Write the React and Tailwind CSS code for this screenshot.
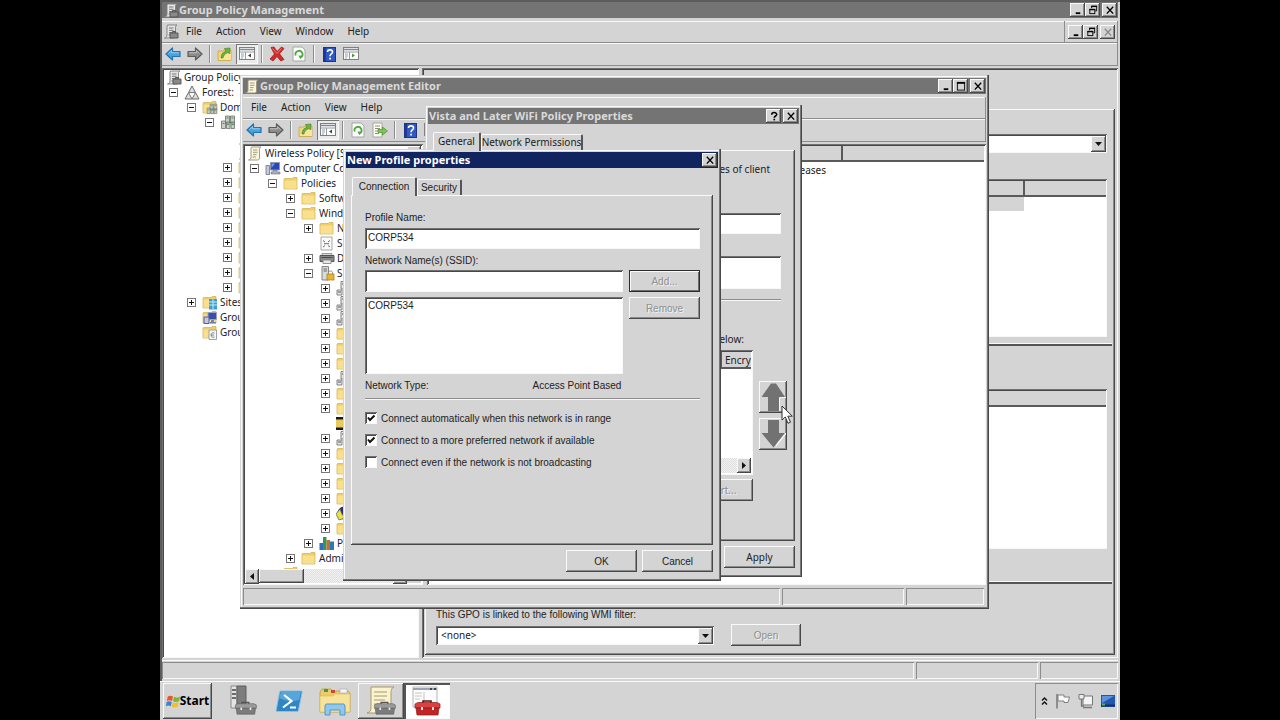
const RAISED =
  "bg-[#d4d4d4] shadow-[inset_-1px_-1px_0_#484848,inset_1px_1px_0_#fafafa,inset_-2px_-2px_0_#8c8c8c]";
const SUNKEN =
  "shadow-[inset_1px_1px_0_#707070,inset_-1px_-1px_0_#f8f8f8,inset_2px_2px_0_#484848]";
const SHALLOW = "shadow-[inset_1px_1px_0_#8c8c8c,inset_-1px_-1px_0_#f8f8f8]";
const WINDOW =
  "bg-[#d4d4d4] shadow-[inset_-1px_-1px_0_#484848,inset_-2px_-2px_0_#777777,inset_1px_1px_0_#d4d4d4,inset_2px_2px_0_#fafafa]";
const SYSTEM = "font-['Noto_Sans',sans-serif] text-[10px]";
const DIALOG = "font-['Liberation_Sans',Arial,sans-serif] text-[10px]";

/* ---------- Icons ---------- */

function Arrow({ dir, color, edge }) {
  return (
    <svg width="16" height="14" viewBox="0 0 16 14" aria-hidden="true" className={dir === "right" ? "-scale-x-100" : ""}>
      <path d="M1 7 L7.5 1 V4.5 H15 V9.5 H7.5 V13 Z" fill={color} stroke={edge} strokeWidth="1.2" strokeLinejoin="round" />
      <path d="M3.5 6.5 L6.6 3.7 V5.8 H14" fill="none" stroke="#ffffff" strokeOpacity=".45" />
    </svg>
  );
}

function FolderUp() {
  return (
    <svg width="16" height="16" viewBox="0 0 16 16" aria-hidden="true">
      <path d="M1 5 H6 L7 4 H14 V14.5 H1 Z" fill="#f2d675" stroke="#c9a53c" strokeWidth=".8" />
      <path d="M2 14 L4 8 H14 V14 Z" fill="#f8e59a" />
      <path d="M4 12 C4 8 6 6 9 5.500 L7.500 2.500 L13 2 L12.500 7.500 L10.500 6.500 C8 8 6.500 9 6 12 Z" fill="#6cb544" stroke="#3d7d22" strokeWidth=".6" />
    </svg>
  );
}

function PaneIcon({ flip }) {
  return (
    <svg width="16" height="14" viewBox="0 0 16 14" aria-hidden="true">
      <rect x=".5" y=".5" width="15" height="12" fill="#fdfdfd" stroke="#808080" />
      <path d="M1 2.500 H15" stroke="#7a8a9a" strokeWidth="1.500" />
      <path d="M1 5 H15 M6.500 5 V12" stroke="#9a9a9a" />
      <path d="M2 7 H5 M2 9 H5 M2 11 H4" stroke="#8aa0b8" />
      {flip ? <path d="M9 6.500 L12 8.500 L9 10.500 Z" fill="#489a38" /> : <path d="M12 6.500 L9 8.500 L12 10.500 Z" fill="#444" />}
    </svg>
  );
}

function DeleteIcon() {
  return (
    <svg width="16" height="16" viewBox="0 0 16 16" aria-hidden="true">
      <path d="M2 1.500 L5 1 L8 5.500 L12.500 1 L15 2.500 L10.500 7.800 L15 13.500 L11.800 15 L8 10.500 L4 15 L1 13 L5.500 8 Z" fill="#d22a26" stroke="#9c1512" strokeWidth=".7" />
      <path d="M3.500 2.500 L8 7.500 L12.500 2.500" fill="none" stroke="#f07a74" />
    </svg>
  );
}

function RefreshIcon() {
  return (
    <svg width="14" height="16" viewBox="0 0 14 16" aria-hidden="true">
      <path d="M1 1 H10 L13 4 V15 H1 Z" fill="#fdfdfd" stroke="#a6a6a6" />
      <path d="M3.700 9.500 A3.500 3.500 0 1 1 8.500 11.500" fill="none" stroke="#4fa83d" strokeWidth="1.800" />
      <path d="M6.500 9.500 L10.500 9.800 L8.300 13.300 Z" fill="#4fa83d" />
    </svg>
  );
}

function ExportIcon() {
  return (
    <svg width="16" height="16" viewBox="0 0 16 16" aria-hidden="true">
      <path d="M1 1 H10 V15 H1 Z" fill="#fdfdf4" stroke="#a6a6a6" />
      <path d="M3 4 H8 M3 6.500 H8 M3 9 H6 M3 11.500 H7" stroke="#8f8f70" />
      <path d="M6 7.500 H10.500 V5 L15.500 9 L10.500 13 V10.500 H6 Z" fill="#7cc552" stroke="#4a9130" strokeWidth=".7" />
    </svg>
  );
}

function HelpIcon() {
  return (
    <svg width="13" height="15" viewBox="0 0 13 15" aria-hidden="true">
      <rect x=".5" y=".5" width="12" height="14" fill="#3159c4" stroke="#1d3584" />
      <path d="M1 1 H3 V14 H1 Z" fill="#1d3a9a" />
      <path d="M4.500 5 C4.500 2.200 9.500 2.200 9.500 5 C9.500 7 7 7 7 9.300" fill="none" stroke="#fff" strokeWidth="1.600" />
      <rect x="6.200" y="10.700" width="1.700" height="1.800" fill="#fff" />
    </svg>
  );
}

function Scroll({ tools }) {
  return (
    <svg width="16" height="15" viewBox="0 0 16 15" aria-hidden="true">
      <path d="M4.500 1 H14 C12.500 1.500 12.500 3 12.500 4 V12 C12.500 13.500 11.500 14 10.500 14 H1.500 C3.500 13.500 4 12.500 4 11 V2.500 Z" fill={tools ? "#e6e6e6" : "#fbf5de"} stroke={tools ? "#7c7c7c" : "#9b917a"} strokeWidth=".9" />
      <path d="M6 4 H10.500 M6 6.300 H10.500 M6 8.600 H9.500 M5.500 11 H9" stroke={tools ? "#777" : "#a59b78"} />
      {tools && <path d="M7 9 H15 V14 H7 Z M9.500 9 V7.500 H12.500 V9" fill="#8a8a8a" stroke="#505050" strokeWidth=".9" />}
    </svg>
  );
}

function ForestIcon() {
  return (
    <svg width="16" height="15" viewBox="0 0 16 15" aria-hidden="true">
      <path d="M8 1 L15 14 H1 Z" fill="#dcdcdc" stroke="#6d6d6d" />
      <path d="M4.500 7.500 H11.500 L8 14 Z" fill="#fafafa" stroke="#6d6d6d" strokeWidth=".9" />
    </svg>
  );
}

function FolderShape() {
  return (
    <>
      <path d="M1 3.500 L1.500 2.500 H9 L10 1.500 H14 V13 H1 Z" fill="#efcd68" stroke="#cfae4d" strokeWidth=".7" />
      <path d="M1.500 4.500 H13.500 V12.700 H1.500 Z" fill="#f8e08e" />
    </>
  );
}

function ServersShape() {
  return (
    <>
      <path d="M5.500 1 H9.500 V8 H5.500 Z M10.500 1 H14.500 V8 H10.500 Z M1.500 6 H5.500 V13.500 H1.500 Z M6.500 7 H10 V13.500 H6.500 Z M11 7 H14.500 V13.500 H11 Z" fill="#c8cec8" stroke="#6a706a" strokeWidth=".8" />
      <path d="M6.500 3 H8.500 M11.500 3 H13.500 M2.500 8.500 H4.500 M7.200 9.500 H9.200 M11.800 9.500 H13.800" stroke="#4a9150" />
    </>
  );
}

function TreeIcon({ kind }) {
  if (kind === "scroll") return <Scroll />;
  if (kind === "gpm") return <Scroll tools />;
  if (kind === "forest") return <ForestIcon />;
  return (
    <svg width="16" height="15" viewBox="0 0 16 15" aria-hidden="true">
      {["folder", "domains", "sites", "modeling", "results"].includes(kind) && <FolderShape />}
      {kind === "domain" && <ServersShape />}
      {kind === "domains" && (
        <g transform="translate(4 3.500) scale(.75)">
          <ServersShape />
        </g>
      )}
      {kind === "sites" && (
        <>
          <path d="M7 4 H15 V14.500 H7 Z" fill="#3a9fd4" />
          <path d="M7 7 H15 M7 10 H15 M11 4 V14" stroke="#c6e8f8" />
        </>
      )}
      {kind === "modeling" && (
        <>
          <path d="M6 2.500 H14.500 V9.500 H6 Z" fill="#3950a8" stroke="#9aa2c4" />
          <path d="M2 7 H7 V13.500 H2 Z" fill="#c4c8dc" stroke="#54609a" />
          <path d="M9 10 H12 V12 H14 V13.500 H8 V12 H9 Z" fill="#7780b0" />
        </>
      )}
      {kind === "results" && (
        <>
          <path d="M7 5 H14.500 V14.500 H7 Z" fill="#f6f6f6" stroke="#8d8d8d" strokeWidth=".8" />
          <path d="M12.500 8 A2.300 2.300 0 1 0 12.500 12 M9.500 10 H12" fill="none" stroke="#6a7f9a" />
        </>
      )}
      {kind === "computer" && (
        <>
          <path d="M5.500 1.500 H14.500 V9 H5.500 Z" fill="#2746b8" stroke="#8f97b4" />
          <path d="M6.500 2.500 H10 L6.500 7 Z" fill="#7f9bea" />
          <path d="M8 9.500 H12 V11 H15 V13 H6 V11 H8 Z" fill="#a9adbd" stroke="#6c7084" strokeWidth=".6" />
          <path d="M1 4.500 H4.500 V13.500 H1 Z" fill="#c6cad8" stroke="#6c7084" strokeWidth=".8" />
        </>
      )}
      {kind === "script" && (
        <>
          <path d="M2 1 H13 V14 H2 Z" fill="#fafafa" stroke="#a8a8a8" />
          <path d="M4 4.500 L6 6 M11 4.500 L9 6 M4 11 L6 9.500 M11 11 L9 9.500 M5 7.700 H10" stroke="#6c6c6c" />
        </>
      )}
      {kind === "printer" && (
        <>
          <path d="M3 2.500 H13 V5 H3 Z" fill="#d4d4d4" stroke="#8a8a8a" strokeWidth=".8" />
          <path d="M1 4.500 H15 V10.500 H1 Z" fill="#8a8a8a" stroke="#555" />
          <path d="M2.500 6.500 H13.500" stroke="#4a4a4a" />
          <path d="M4 9 H12 V12.500 H4 Z" fill="#e8e8e8" stroke="#7c7c7c" strokeWidth=".8" />
        </>
      )}
      {kind === "secure" && (
        <>
          <path d="M3 .5 H9.500 V14 H3 Z" fill="#dadada" stroke="#858585" />
          <path d="M4.500 3 H8 M4.500 5 H8" stroke="#666" />
          <rect x="8" y="8" width="7" height="6" fill="#eab52d" stroke="#a87a10" strokeWidth=".7" />
          <path d="M9.500 8 V6.500 C9.500 4.500 13.500 4.500 13.500 6.500 V8" fill="none" stroke="#8d8d8d" />
        </>
      )}
      {kind === "server" && (
        <>
          <path d="M5 .5 H9 V8 H5 Z M1 9 H6 V14 H1 Z" fill="#e6e6e6" stroke="#777" strokeWidth=".9" />
          <path d="M6 3 H8 M2 11 H5" stroke="#555" />
        </>
      )}
      {kind === "wireless" && (
        <>
          <path d="M0 1 H16 V14 H0 Z" fill="#1a1a1a" />
          <path d="M0 3.500 H14 V11.500 H0 Z" fill="#e8c95c" />
        </>
      )}
      {kind === "ipsec" && (
        <>
          <circle cx="8" cy="7" r="6" fill="#26308c" stroke="#222" />
          <path d="M0 8 L4 3 L6 8 L9 12 L3 14 Z" fill="#e9e04a" stroke="#555" strokeWidth=".7" />
        </>
      )}
      {kind === "chart" && (
        <>
          <path d="M.5 7 H4 V14 H.5 Z" fill="#2e6fc0" />
          <path d="M4 1 H7.500 V14 H4 Z" fill="#2f9a50" />
          <path d="M7.500 4 H11 V14 H7.500 Z" fill="#c96a3c" />
          <path d="M11 5.500 H15 V14 H11 Z" fill="#2a7cae" />
        </>
      )}
    </svg>
  );
}

/* ---------- Shared controls ---------- */

const GLYPHS = {
  minimize: <path d="M3 9 H8" stroke="currentColor" strokeWidth="2" />,
  maximize: (
    <>
      <rect x="1.500" y="2" width="8" height="8" fill="none" stroke="currentColor" />
      <path d="M1 2 H10" stroke="currentColor" strokeWidth="2" />
    </>
  ),
  restore: (
    <>
      <path d="M4 3.500 V1.500 H9.500 V6.500 H8" fill="none" stroke="currentColor" />
      <path d="M3.500 1.500 H10" stroke="currentColor" strokeWidth="1.600" />
      <rect x="2" y="5" width="5.500" height="4.500" fill="none" stroke="currentColor" />
      <path d="M1.500 5 H8" stroke="currentColor" strokeWidth="1.600" />
    </>
  ),
  close: <path d="M2 2 L9 9.500 M9 2 L2 9.500" stroke="currentColor" strokeWidth="1.500" />,
  help: (
    <>
      <path d="M3 4 C3 1 8.500 1 8.500 3.800 C8.500 5.500 5.700 5.500 5.700 7.500" fill="none" stroke="currentColor" strokeWidth="1.700" />
      <rect x="4.900" y="8.500" width="1.800" height="1.800" fill="currentColor" />
    </>
  ),
};

function CaptionButton({ name, dim }) {
  return (
    <button type="button" aria-label={name} className={`${RAISED} flex h-[14px] w-[15px] items-center justify-center ${dim ? "text-[#8a8a8a]" : "text-black"}`}>
      <svg width="10" height="10" viewBox="0 0 11 11" aria-hidden="true">
        {GLYPHS[name]}
      </svg>
    </button>
  );
}

function CaptionButtons({ names, dimClose }) {
  return (
    <div className="flex items-center">
      {names.map((n) => (
        <span key={n} className={n === "close" ? "ml-[2px] flex" : "flex"}>
          <CaptionButton name={n} dim={dimClose && n === "close"} />
        </span>
      ))}
    </div>
  );
}

function TitleBar({ title, icon, buttons, active }) {
  return (
    <header className={`flex h-[16px] shrink-0 items-center px-px ${active ? "bg-[#10245f] text-white" : "bg-[#747474] text-[#dadada]"}`}>
      {icon}
      <h2 className="flex-1 truncate font-['Noto_Sans',sans-serif] text-[11px] leading-4 font-bold">{title}</h2>
      <CaptionButtons names={buttons} />
    </header>
  );
}

function PushButton({ children, size, disabled, isDefault, font = DIALOG }) {
  return (
    <button
      type="button"
      disabled={disabled}
      className={`${font} ${size} flex h-[22px] items-center justify-center ${
        isDefault ? "bg-[#d4d4d4] shadow-[inset_0_0_0_1px_#2c2c2c,inset_2px_2px_0_#fafafa,inset_-2px_-2px_0_#6c6c6c]" : RAISED
      } ${disabled ? "text-[#8e8e8e] [text-shadow:1px_1px_0_#f4f4f4]" : "text-[#222]"}`}
    >
      {children}
    </button>
  );
}

function MenuBar({ items, icon, children, label }) {
  return (
    <nav aria-label={label} className={`${SYSTEM} flex h-[22px] items-center border-r border-b border-r-[#8c8c8c] border-b-[#8c8c8c] pl-px text-[#222] shadow-[inset_0_1px_0_#f8f8f8]`}>
      {icon}
      {items.map((m) => (
        <button type="button" key={m} className="px-[7px]">
          {m}
        </button>
      ))}
      {children}
    </nav>
  );
}

function Tool({ label, pressed, children }) {
  return (
    <button
      type="button"
      aria-label={label}
      className={`flex h-[20px] w-[22px] items-center justify-center ${pressed ? "bg-[#ececec] shadow-[inset_1px_1px_0_#777,inset_-1px_-1px_0_#fafafa]" : ""}`}
    >
      {children}
    </button>
  );
}

function Separator() {
  return <span className="mx-[3px] h-[18px] w-[2px] border-r border-l border-l-[#8c8c8c] border-r-[#f8f8f8]" />;
}

function ToolBar({ children }) {
  return (
    <div role="toolbar" className="flex h-[23px] items-center border-r border-b border-r-[#8c8c8c] border-b-[#8c8c8c] shadow-[inset_0_1px_0_#f8f8f8]">
      {children}
    </div>
  );
}

function StatusBar() {
  return (
    <footer className="flex h-[17px] shrink-0 gap-[2px]">
      <span className={`${SHALLOW} flex-1`} />
      <span className={`${SHALLOW} w-[122px]`} />
      <span className={`${SHALLOW} w-[78px]`} />
    </footer>
  );
}

const INDENT = ["pl-[2px]", "pl-[5px]", "pl-[23px]", "pl-[41px]", "pl-[59px]", "pl-[76px]"];

function Expander({ open }) {
  return (
    <button type="button" aria-label={open ? "Collapse" : "Expand"} className="flex size-[9px] shrink-0 items-center justify-center border border-[#777] bg-white">
      <svg width="7" height="7" viewBox="0 0 7 7" aria-hidden="true">
        <path d={open ? "M1 3.500 H6" : "M1 3.500 H6 M3.500 1 V6"} stroke="#111" />
      </svg>
    </button>
  );
}

function Tree({ rows, label }) {
  return (
    <ul aria-label={label} className={`${SYSTEM} min-w-0 text-[#222]`}>
      {rows.map(([level, state, icon, text], i) => (
        <li key={i} className={`flex h-[15px] items-center ${INDENT[level]}`}>
          {level > 0 && (
            <span className="flex w-[15px] shrink-0">{state && <Expander open={state === "-"} />}</span>
          )}
          <span className="flex w-[18px] shrink-0">
            <TreeIcon kind={icon} />
          </span>
          <span className="whitespace-nowrap">{text}</span>
        </li>
      ))}
    </ul>
  );
}

function DropDown({ id, value, width, label }) {
  return (
    <div className={`relative flex ${width}`}>
      <select id={id} aria-label={label} className={`${SYSTEM} ${SUNKEN} h-[19px] w-full appearance-none bg-white pl-[5px] text-[#222]`}>
        <option>{value}</option>
      </select>
      <span className={`${RAISED} pointer-events-none absolute top-[2px] right-[1px] flex h-[16px] w-[15px] items-center justify-center`}>
        <svg width="7" height="4" viewBox="0 0 7 4" aria-hidden="true">
          <path d="M0 0 H7 L3.500 4 Z" fill="#111" />
        </svg>
      </span>
    </div>
  );
}

function ScrollButton({ dir }) {
  return (
    <button type="button" aria-label={`Scroll ${dir}`} className={`${RAISED} flex h-[15px] w-[14px] shrink-0 items-center justify-center`}>
      <svg width="4" height="7" viewBox="0 0 4 7" aria-hidden="true">
        <path d={dir === "left" ? "M4 0 V7 L0 3.500 Z" : "M0 0 V7 L4 3.500 Z"} fill="#111" />
      </svg>
    </button>
  );
}

function Tabs({ names }) {
  return (
    <div role="tablist" className="relative z-10 flex items-end">
      {names.map((n, i) => (
        <button
          type="button"
          role="tab"
          aria-selected={i === 0}
          key={n.text}
          className={`${n.font} flex items-center justify-center rounded-t-[2px] border-t border-l border-r-2 border-t-[#fafafa] border-l-[#fafafa] border-r-[#555] bg-[#d4d4d4] whitespace-nowrap text-[#222] ${
            i === 0 ? "-mb-px h-[19px] pb-[2px]" : "h-[16px]"
          } ${n.width}`}
        >
          {n.text}
        </button>
      ))}
    </div>
  );
}

function DetailTable({ height, selected }) {
  return (
    <div className={`${SUNKEN} bg-white p-[2px] pr-px ${height}`}>
      <table className="w-full table-fixed border-collapse">
        <thead>
          <tr className="h-[15px] border-b-2 border-[#5a5a5a] bg-[#d4d4d4]">
            <th className={selected ? "border-r-2 border-[#5a5a5a]" : ""} />
            {selected && <th className="w-[82px]" />}
          </tr>
        </thead>
        <tbody>
          <tr className="h-[15px]">
            <td className={selected ? "bg-[#d4d4d4]" : ""} />
            {selected && <td />}
          </tr>
        </tbody>
      </table>
    </div>
  );
}

/* ---------- Main console ---------- */

const MAIN_TREE = [
  [0, "", "gpm", "Group Policy"],
  [1, "-", "forest", "Forest:"],
  [2, "-", "domains", "Dom"],
  [3, "-", "domain", ""],
  [4, "", "scroll", ""],
  [4, "", "scroll", ""],
  [4, "+", "folder", ""],
  [4, "+", "folder", ""],
  [4, "+", "folder", ""],
  [4, "+", "folder", ""],
  [4, "+", "folder", ""],
  [4, "+", "folder", ""],
  [4, "+", "folder", ""],
  [4, "+", "folder", ""],
  [4, "+", "folder", ""],
  [2, "+", "sites", "Sites"],
  [2, "", "modeling", "Grou"],
  [2, "", "results", "Grou"],
];

function Console() {
  return (
    <main className="flex min-h-0 flex-1 flex-col bg-[#d4d4d4] pt-[2px] pr-[2px] pl-[2px] shadow-[inset_2px_2px_0_#5c5c5c]">
      <TitleBar title="Group Policy Management" icon={<Scroll tools />} buttons={["minimize", "restore", "close"]} />
      <div className="h-[3px] shrink-0" />
      <MenuBar label="Console menu" items={["File", "Action", "View", "Window", "Help"]} icon={<Scroll tools />}>
        <div className="ml-auto flex h-full items-center border-l border-[#8c8c8c] px-[2px] pl-[3px]">
          <CaptionButtons names={["minimize", "restore", "close"]} dimClose />
        </div>
      </MenuBar>
      <ToolBar>
        <Tool label="Back"><Arrow color="#44a4e0" edge="#2573ad" /></Tool>
        <Tool label="Forward"><Arrow dir="right" color="#8c8c8c" edge="#5c5c5c" /></Tool>
        <Separator />
        <Tool label="Up one level"><FolderUp /></Tool>
        <Tool label="Show tree" pressed><PaneIcon /></Tool>
        <Separator />
        <Tool label="Delete"><DeleteIcon /></Tool>
        <Tool label="Refresh"><RefreshIcon /></Tool>
        <Separator />
        <Tool label="Help"><HelpIcon /></Tool>
        <Tool label="Show actions"><PaneIcon flip /></Tool>
      </ToolBar>
      <div className="mt-[2px] flex min-h-0 flex-1 gap-[3px]">
        <section className={`${SUNKEN} w-[257px] shrink-0 overflow-hidden bg-white p-[2px]`}>
          <Tree rows={MAIN_TREE} label="Console tree" />
        </section>
        <section className={`${SUNKEN} flex min-w-0 flex-1 flex-col px-[3px] pt-[41px] pb-[3px]`}>
          <div className={`${RAISED} flex min-h-0 flex-1 flex-col pt-[25px]`}>
            <div className="mr-[8px] ml-[11px]">
              <DropDown id="location" label="Location" value="" width="w-full" />
            </div>
            <div className="mt-[26px] mr-[8px] ml-[11px]">
              <DetailTable height="h-[158px]" selected />
            </div>
            <div className="mt-[6px] mr-[3px] h-[3px] border-t border-b-2 border-t-[#fafafa] border-b-[#555]" />
            <div className="mt-[43px] mr-[8px] ml-[11px]">
              <DetailTable height="h-[160px]" />
            </div>
            <div className="mt-[32px] mr-[3px] h-[3px] border-t border-b-2 border-t-[#fafafa] border-b-[#555]" />
            <label htmlFor="wmi" className={`${DIALOG} mt-[24px] ml-[11px] leading-[14px] text-[#222]`}>
              This GPO is linked to the following WMI filter:
            </label>
            <div className="mt-[2px] ml-[11px] flex items-center gap-[17px]">
              <DropDown id="wmi" value="<none>" width="w-[278px]" />
              <PushButton size="w-[70px]" disabled>Open</PushButton>
            </div>
          </div>
        </section>
      </div>
      <div className="mt-[2px] mb-[2px] border-t border-[#fafafa] pt-px">
        <StatusBar />
      </div>
    </main>
  );
}

/* ---------- Policy editor ---------- */

const EDITOR_TREE = [
  [0, "", "scroll", "Wireless Policy [S"],
  [1, "-", "computer", "Computer Co"],
  [2, "-", "folder", "Policies"],
  [3, "+", "folder", "Softw"],
  [3, "-", "folder", "Wind"],
  [4, "+", "folder", "N"],
  [4, "", "script", "S"],
  [4, "+", "printer", "D"],
  [4, "-", "secure", "S"],
  [5, "+", "server", ""],
  [5, "+", "server", ""],
  [5, "+", "server", ""],
  [5, "+", "folder", ""],
  [5, "+", "folder", ""],
  [5, "+", "folder", ""],
  [5, "+", "server", ""],
  [5, "+", "folder", ""],
  [5, "+", "folder", ""],
  [5, "", "wireless", ""],
  [5, "+", "server", ""],
  [5, "+", "folder", ""],
  [5, "+", "folder", ""],
  [5, "+", "folder", ""],
  [5, "+", "folder", ""],
  [5, "+", "ipsec", ""],
  [5, "+", "folder", ""],
  [4, "+", "chart", "P"],
  [3, "+", "folder", "Admin"],
  [2, "+", "folder", "Preferences"],
];

const TRACK = "bg-[#ececec] bg-[repeating-conic-gradient(#dfdfdf_0_25%,#f2f2f2_0_50%)] bg-[length:2px_2px]";

function Editor() {
  return (
    <section aria-label="Group Policy Management Editor" className={`${WINDOW} absolute top-[75px] left-[80px] flex h-[534px] w-[749px] flex-col p-[3px] pb-[4px]`}>
      <TitleBar title="Group Policy Management Editor" icon={<Scroll />} buttons={["minimize", "maximize", "close"]} />
      <div className="h-[3px] shrink-0" />
      <MenuBar label="Editor menu" items={["File", "Action", "View", "Help"]} />
      <ToolBar>
        <Tool label="Back"><Arrow color="#44a4e0" edge="#2573ad" /></Tool>
        <Tool label="Forward"><Arrow dir="right" color="#8c8c8c" edge="#5c5c5c" /></Tool>
        <Separator />
        <Tool label="Up one level"><FolderUp /></Tool>
        <Tool label="Show tree" pressed><PaneIcon /></Tool>
        <Separator />
        <Tool label="Refresh"><RefreshIcon /></Tool>
        <Tool label="Export list"><ExportIcon /></Tool>
        <Separator />
        <Tool label="Help"><HelpIcon /></Tool>
        <Tool label="Show actions"><PaneIcon flip /></Tool>
      </ToolBar>
      <div className="mt-[2px] flex min-h-0 flex-1 gap-[4px]">
        <section className={`${SUNKEN} flex w-[180px] shrink-0 bg-white p-[2px]`}>
          <div className="flex min-w-0 flex-1 flex-col">
            <div className="min-h-0 flex-1 overflow-hidden">
              <Tree rows={EDITOR_TREE} label="Policy tree" />
            </div>
            <div className={`${TRACK} flex h-[14px] shrink-0`}>
              <ScrollButton dir="left" />
              <span className={`${RAISED} w-[45px]`} />
              <span className="flex-1" />
              <ScrollButton dir="right" />
            </div>
          </div>
          <div className={`${TRACK} flex w-[14px] shrink-0 flex-col`}>
            <span className={`${RAISED} h-[15px]`} />
            <span className="flex-1" />
            <span className="h-[14px] bg-[#d4d4d4]" />
          </div>
        </section>
        <section className={`${SUNKEN} min-w-0 flex-1 bg-white p-[2px]`}>
          <table className={`${SYSTEM} w-full table-fixed border-collapse text-[#222]`}>
            <thead>
              <tr className="h-[15px] border-b-2 border-[#5a5a5a] bg-[#d4d4d4]">
                <th className="w-[413px] border-r-2 border-[#5a5a5a]" />
                <th />
              </tr>
            </thead>
            <tbody>
              <tr className="h-[17px]">
                <td className="pr-[16px] text-right leading-4">eases</td>
                <td />
              </tr>
            </tbody>
          </table>
        </section>
      </div>
      <div className="mt-[3px] pr-[2px]">
        <StatusBar />
      </div>
    </section>
  );
}

/* ---------- WiFi policy dialog ---------- */

function MoveButton({ down }) {
  return (
    <button type="button" aria-label={down ? "Move down" : "Move up"} className={`${RAISED} flex h-[32px] w-[28px] items-center justify-center`}>
      <svg width="26" height="30" viewBox="0 0 26 30" aria-hidden="true">
        {down ? (
          <>
            <path d="M20 1 V14 H27 L15 29 L20 16 Z" fill="#f6f6f6" />
            <path d="M8 1 H19 V14 H25 L13.500 28.500 L1.500 14 H8 Z" fill="#727272" />
          </>
        ) : (
          <>
            <path d="M19 16 H26 V15 H20 V29 H19 Z" fill="#f6f6f6" />
            <path d="M11 1.500 H16 L25 15 H19 V29 H8 V15 H1.500 Z" fill="#727272" />
          </>
        )}
      </svg>
    </button>
  );
}

function WifiDialog() {
  return (
    <section aria-label="Vista and Later WiFi Policy Properties" className={`${WINDOW} absolute top-[105px] left-[265px] flex h-[472px] w-[377px] flex-col p-[3px]`}>
      <TitleBar title="Vista and Later WiFi Policy Properties" buttons={["help", "close"]} />
      <div className="mt-[8px] ml-[5px]">
        <Tabs
          names={[
            { text: "General", width: "w-[48px]", font: SYSTEM },
            { text: "Network Permissions", width: "w-[102px]", font: SYSTEM },
          ]}
        />
      </div>
      <div className={`${RAISED} ${SYSTEM} mr-[4px] ml-[5px] flex flex-1 flex-col items-end pr-[14px] text-[#222]`}>
        <p className="mt-[11px] mr-[11px] leading-4">es of client</p>
        <input aria-label="Policy name" className={`${SUNKEN} mt-[36px] h-[21px] w-full bg-white`} />
        <textarea aria-label="Description" className={`${SUNKEN} mt-[22px] h-[33px] w-full resize-none bg-white`} />
        <hr className="mt-[10px] h-[2px] w-full border-t border-b border-t-[#8c8c8c] border-b-[#f8f8f8]" />
        <p className="mt-[30px] mr-[37px] leading-4">elow:</p>
        <div className="-mr-[6px] mt-[3px] flex w-full items-start justify-end gap-[6px]">
          <div className="flex flex-1 flex-col items-end">
            <div className={`${SUNKEN} flex h-[125px] w-full flex-col bg-white p-[2px]`}>
              <table className="w-full table-fixed border-collapse">
                <thead>
                  <tr className="h-[16px] border-b-2 border-[#5a5a5a] bg-[#d4d4d4]">
                    <th />
                    <th className="w-[30px] overflow-hidden border-l-2 border-[#5a5a5a] pl-[3px] text-left leading-[14px] font-normal">Encry</th>
                  </tr>
                </thead>
              </table>
              <span className="flex-1" />
              <div className={`${TRACK} flex h-[15px] justify-end`}>
                <ScrollButton dir="right" />
              </div>
            </div>
            <div className="mt-[4px]">
              <PushButton size="w-[55px]" font={SYSTEM} disabled>ort...</PushButton>
            </div>
          </div>
          <div className="mt-[31px] flex flex-col gap-[5px]">
            <MoveButton />
            <MoveButton down />
          </div>
        </div>
      </div>
      <div className="mt-[5px] mr-[4px] mb-[6px] flex justify-end">
        <PushButton size="w-[71px]" font={SYSTEM}>Apply</PushButton>
      </div>
    </section>
  );
}

/* ---------- New profile dialog ---------- */

function Check({ label, checked }) {
  return (
    <label className="flex h-[14px] items-center gap-[4px]">
      <span className="relative flex">
        <input type="checkbox" defaultChecked={checked} className={`${SUNKEN} peer size-[12px] appearance-none bg-white`} />
        <svg width="12" height="12" viewBox="0 0 12 12" aria-hidden="true" className="pointer-events-none absolute inset-0 hidden peer-checked:block">
          <path d="M3 5.500 L5 8 L9.500 3.500" fill="none" stroke="#111" strokeWidth="2" />
        </svg>
      </span>
      {label}
    </label>
  );
}

function ProfileDialog() {
  return (
    <section aria-label="New Profile properties" className={`${WINDOW} ${DIALOG} absolute top-[149px] left-[183px] flex h-[432px] w-[378px] flex-col p-[3px] text-[#222]`}>
      <TitleBar title="New Profile properties" buttons={["close"]} active />
      <div className="mt-[9px] ml-[6px]">
        <Tabs
          names={[
            { text: "Connection", width: "w-[65px]", font: DIALOG },
            { text: "Security", width: "w-[45px]", font: DIALOG },
          ]}
        />
      </div>
      <div className={`${RAISED} mr-[5px] ml-[5px] flex flex-1 flex-col pt-[16px] pr-[13px] pl-[14px]`}>
        <label htmlFor="profile" className="leading-[14px]">Profile Name:</label>
        <input id="profile" defaultValue="CORP534" className={`${SUNKEN} mt-[3px] h-[21px] bg-white px-[3px] pb-[3px]`} />
        <label htmlFor="ssid" className="mt-[5px] leading-[14px]">Network Name(s) (SSID):</label>
        <div className="mt-[2px] flex gap-[6px]">
          <input id="ssid" className={`${SUNKEN} h-[22px] min-w-0 flex-1 bg-white px-[3px]`} />
          <PushButton size="w-[71px]" disabled isDefault>Add...</PushButton>
        </div>
        <div className="mt-[5px] flex gap-[6px]">
          <ul className={`${SUNKEN} h-[77px] flex-1 bg-white p-[3px]`}>
            <li className="leading-[12px]">CORP534</li>
          </ul>
          <PushButton size="w-[71px]" disabled>Remove</PushButton>
        </div>
        <div className="mt-[5px] flex leading-[14px]">
          <span className="w-1/2">Network Type:</span>
          <span>Access Point Based</span>
        </div>
        <hr className="mt-[5px] h-[2px] border-t border-b border-t-[#8c8c8c] border-b-[#f8f8f8]" />
        <div className="mt-[11px] flex flex-col gap-[8px]">
          <Check label="Connect automatically when this network is in range" checked />
          <Check label="Connect to a more preferred network if available" checked />
          <Check label="Connect even if the network is not broadcasting" />
        </div>
      </div>
      <div className="mt-[5px] mr-[5px] mb-[6px] flex justify-end gap-[5px]">
        <PushButton size="w-[71px]">OK</PushButton>
        <PushButton size="w-[71px]">Cancel</PushButton>
      </div>
    </section>
  );
}

/* ---------- Taskbar ---------- */

function Toolbox({ red }) {
  return (
    <>
      <path d="M12 19 V16 H20 V19" fill="none" stroke={red ? "#5c1414" : "#555"} strokeWidth="1.600" />
      <path d="M4 19 L7 17.500 H26 L29 19 V23 H4 Z" fill={red ? "#dd4040" : "#9a9a9a"} stroke={red ? "#8c1a1a" : "#5a5a5a"} strokeWidth=".7" />
      <path d="M5 23 H28 L27 30 H6 Z" fill={red ? "#c02424" : "#7c7c7c"} stroke={red ? "#8c1a1a" : "#5a5a5a"} strokeWidth=".7" />
      <path d="M10 22 H12 V25 H10 Z M21 22 H23 V25 H21 Z" fill="#e8e8e8" />
    </>
  );
}

function TaskButton({ label, state, children }) {
  const look =
    state === "raised" ? RAISED : state === "pressed" ? "bg-white shadow-[inset_2px_2px_0_#555,inset_-1px_-1px_0_#fafafa]" : "";
  return (
    <button type="button" aria-label={label} className={`${look} flex h-[36px] w-[46px] items-center justify-center`}>
      <svg width="32" height="32" viewBox="0 0 32 32" aria-hidden="true">
        {children}
      </svg>
    </button>
  );
}

function Taskbar() {
  return (
    <nav aria-label="Taskbar" className="flex h-[39px] shrink-0 items-center border-t border-[#fafafa] bg-[#d4d4d4] pr-[2px] pl-[3px]">
      <button type="button" className={`${RAISED} flex h-[36px] w-[49px] items-center justify-center font-['Noto_Sans',sans-serif] text-[12px] font-bold text-black`}>
        <svg width="14" height="15" viewBox="0 0 14 15" aria-hidden="true">
          <path d="M1.800 2.500 C3.500 1.300 5.300 1.500 7 2.600 L6 7 C4.300 6 2.600 6 .8 7 Z" fill="#e8562a" />
          <path d="M8 2.800 C10 3.900 12 3.900 14 2.800 L13 7.200 C11 8.200 9 8.200 7 7.300 Z" fill="#7ab833" />
          <path d="M.6 8 C2.300 7 4 7 5.800 8 L4.800 12.300 C3.200 11.300 1.500 11.300 0 12.300 Z" fill="#3a80d6" />
          <path d="M6.700 8.400 C8.600 9.300 10.700 9.300 12.700 8.300 L11.700 12.700 C9.700 13.700 7.700 13.600 5.800 12.700 Z" fill="#f4be2a" />
        </svg>
        Start
      </button>
      <div className="ml-[8px] flex">
        <TaskButton label="Server Manager">
          <path d="M4 1 H10 V23 H4 Z" fill="#e4e4e4" stroke="#8a8a8a" />
          <path d="M10 1 H19 V23 H10 Z" fill="#7d7d7d" stroke="#5e5e5e" />
          <path d="M5 5 H9 M5 9 H9 M5 13 H9" stroke="#444" strokeWidth="1.500" />
          <g transform="translate(5 4) scale(.84)"><Toolbox /></g>
        </TaskButton>
        <TaskButton label="PowerShell">
          <path d="M8 6 H28 C29 6 29.500 6.500 29 8 L25.500 25 C25.300 26 24.500 26.500 23.500 26.500 H4.500 C3.500 26.500 3 25.800 3.200 25 L6.500 7.500 C6.700 6.500 7.300 6 8 6 Z" fill="#2f86c4" stroke="#8fc0e0" />
          <path d="M8 7 H28 L26 15 C18 17 12 16 6 13 Z" fill="#69b2e2" fillOpacity=".7" />
          <path d="M11 10 L18.500 16 L10 22.500 M17 22.500 H23" fill="none" stroke="#fff" strokeWidth="2.200" />
        </TaskButton>
        <TaskButton label="Explorer">
          <path d="M1 7 L3 4 H12 L14 6 H29 L31 8 V27 H1 Z" fill="#edcc66" stroke="#bf9c3f" strokeWidth=".8" />
          <path d="M5 4 H9 V7 H5 Z" fill="#3f9a4a" />
          <path d="M12 5 H16 V8 H12 Z" fill="#c74a38" />
          <path d="M21 4 H28 V8 H21 Z" fill="#f5f5f5" stroke="#aaa" strokeWidth=".6" />
          <path d="M1 11 H14 L16 9 H31 V27 H1 Z" fill="#f8e39a" stroke="#d8b95c" strokeWidth=".6" />
          <path d="M6 30 V21 C6 19.500 7 19 8 19 H24 C25 19 26 19.500 26 21 V30 H21 V25 H11 V30 Z" fill="#8fc8ec" stroke="#4f97c6" />
        </TaskButton>
        <TaskButton label="Group Policy Editor" state="raised">
          <path d="M6 2 H29 C26 3 26 6 26 8 V24 C26 27 24 28 22 28 H2 C5 27 6 26 6 23 Z" fill="#fbf3cf" stroke="#a89a68" />
          <path d="M9 7 H22 M9 11 H22 M9 15 H20 M9 19 H18" stroke="#a89c70" strokeWidth="1.200" />
          <g transform="translate(6 4) scale(.84)"><Toolbox /></g>
        </TaskButton>
        <TaskButton label="Management Console" state="pressed">
          <path d="M2 2 H26 V22 H2 Z" fill="#fdfdfd" stroke="#b4b4b4" />
          <path d="M2 4 H26" stroke="#9aa4b0" strokeWidth="2" />
          <path d="M4 8 H11 M4 11 H11 M4 14 H9 M13 7 V20" stroke="#c4c4c4" />
          <path d="M19 4 H21 M23 4 H25" stroke="#445" strokeWidth="2" />
          <Toolbox red />
        </TaskButton>
      </div>
      <div className={`${SHALLOW} ml-auto flex h-[36px] w-[83px] items-center gap-[7px] pl-[6px]`}>
        <svg width="7" height="8" viewBox="0 0 7 8" aria-hidden="true">
          <path d="M1 3.500 L3.500 1 L6 3.500 M1 7.500 L3.500 5 L6 7.500" fill="none" stroke="#111" strokeWidth="1.400" />
        </svg>
        <svg width="16" height="16" viewBox="0 0 16 16" aria-hidden="true">
          <path d="M2 1 V15.500" stroke="#777" strokeWidth="1.500" />
          <path d="M3 2 H9 V4 H14.500 L13 9.500 H9 V8 H3 Z" fill="#fafafa" stroke="#808080" />
        </svg>
        <svg width="16" height="16" viewBox="0 0 16 16" aria-hidden="true">
          <path d="M5 3 H14.500 V12 H5 Z" fill="#f4f4f4" stroke="#777" />
          <path d="M5 14.500 H14" stroke="#777" strokeWidth="1.500" />
          <path d="M1 1.500 H6 V6 H1 Z" fill="#ededed" stroke="#777" />
          <path d="M3.500 6 V13 H6" fill="none" stroke="#777" strokeWidth="1.300" />
        </svg>
        <svg width="14" height="12" viewBox="0 0 14 12" aria-hidden="true">
          <rect width="14" height="12" fill="#2458ae" />
          <path d="M1 1 H13 L1 8 Z" fill="#5d93de" />
          <path d="M0 10.500 H14" stroke="#16305e" strokeWidth="2" />
          <path d="M1 9.500 H4" stroke="#58b45a" strokeWidth="2" />
        </svg>
      </div>
    </nav>
  );
}

export default function App() {
  return (
    <div className="flex min-h-screen justify-center bg-black">
      <div className="relative flex h-screen min-h-[680px] w-3/4 min-w-[840px] flex-col overflow-hidden bg-[#d4d4d4]">
        <Console />
        <Taskbar />
        <Editor />
        <WifiDialog />
        <ProfileDialog />
        <svg width="13" height="20" viewBox="0 0 13 20" aria-hidden="true" className="pointer-events-none absolute top-[405px] left-[621px]">
          <path d="M1 1 V15 L4.300 12 L7 18.300 L9.500 17.200 L6.800 11.200 H11.300 Z" fill="#fff" stroke="#333" />
        </svg>
      </div>
    </div>
  );
}
